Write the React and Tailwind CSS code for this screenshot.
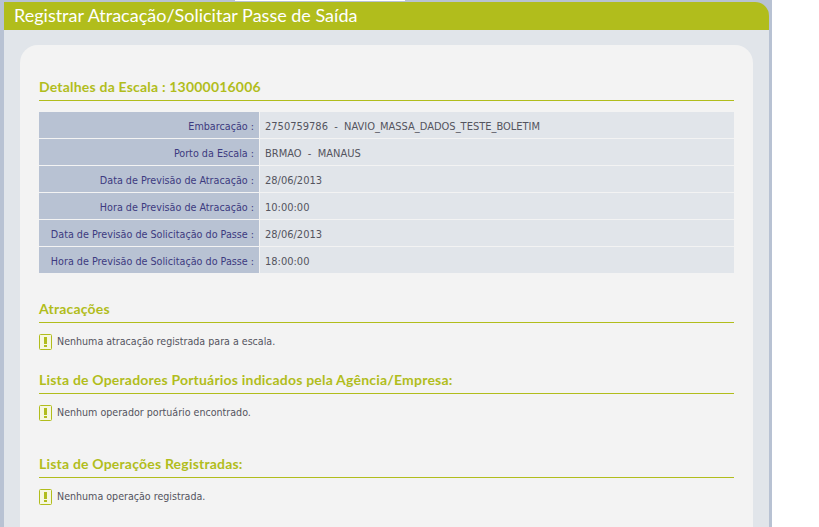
const rows = [
  ["Embarcação :", "2750759786  -  NAVIO_MASSA_DADOS_TESTE_BOLETIM"],
  ["Porto da Escala :", "BRMAO  -  MANAUS"],
  ["Data de Previsão de Atracação :", "28/06/2013"],
  ["Hora de Previsão de Atracação :", "10:00:00"],
  ["Data de Previsão de Solicitação do Passe :", "28/06/2013"],
  ["Hora de Previsão de Solicitação do Passe :", "18:00:00"],
];

const Heading = ({ children, className }) => (
  <h2
    className={`h-[21px] border-b border-[#b1bd1c] font-['Lato',sans-serif] text-[14px] tracking-[0.2px] leading-[13px] font-bold text-[#b1bd1c] ${className}`}
  >
    {children}
  </h2>
);

const WarningIcon = () => (
  <svg width="13" height="16" viewBox="0 0 13 16" className="shrink-0">
    <rect x="0.5" y="0.5" width="12" height="15" rx="1" fill="#f6f7e0" stroke="#b1bd1c" />
    <rect x="5" y="3" width="3" height="7" fill="#b1bd1c" />
    <rect x="5" y="11" width="3" height="2" fill="#b1bd1c" />
  </svg>
);

const Warning = ({ children, className }) => (
  <div className={`flex gap-[5px] h-[17px] ${className}`}>
    <WarningIcon />
    <p className="text-[#54545e] text-[10.6px] leading-[14px]">{children}</p>
  </div>
);

export default function App() {
  return (
    <div className="w-[772px] h-[527px] overflow-hidden bg-[#b8c2d3] pl-[4px] pr-[3px] font-['DejaVu_Sans_Condensed','DejaVu_Sans',sans-serif] text-[11px]">
      <div className="h-[2px] flex">
        <div className="w-[231px]" />
        <div className="w-[170px] h-[1px] bg-white" />
      </div>
      <div className="h-[28px] bg-[#b1bd1c] rounded-tr-[14px] pl-[10px] font-['Lato',sans-serif] text-[18px] leading-[27px] text-white">
        Registrar Atracação/Solicitar Passe de Saída
      </div>
      <div className="h-[497px] bg-[#e1e5ea] pt-[15px] px-[16px]">
        <div className="h-[500px] bg-[#f3f3f3] rounded-t-[18px] pt-[35px] px-[19px]">
          <Heading>Detalhes da Escala : 13000016006</Heading>
          <div className="mt-[11px] flex flex-col gap-[1px]">
            {rows.map((row) => (
              <div key={row[0]} className="flex gap-[1px] h-[26px] leading-[29px]">
                <div className="w-[220px] bg-[#b8c2d3] pr-[5px] text-right text-[10.7px] text-[#3d3a80]">{row[0]}</div>
                <div className="flex-1 bg-[#e1e5ea] pl-[5px] text-[#54545e] whitespace-pre">{row[1]}</div>
              </div>
            ))}
          </div>
          <Heading className="mt-[29px]">Atracações</Heading>
          <Warning className="mt-[11px]">Nenhuma atracação registrada para a escala.</Warning>
          <Heading className="mt-[22px]">Lista de Operadores Portuários indicados pela Agência/Empresa:</Heading>
          <Warning className="mt-[11px]">Nenhum operador portuário encontrado.</Warning>
          <Heading className="mt-[35px]">Lista de Operações Registradas:</Heading>
          <Warning className="mt-[11px]">Nenhuma operação registrada.</Warning>
        </div>
      </div>
    </div>
  );
}
